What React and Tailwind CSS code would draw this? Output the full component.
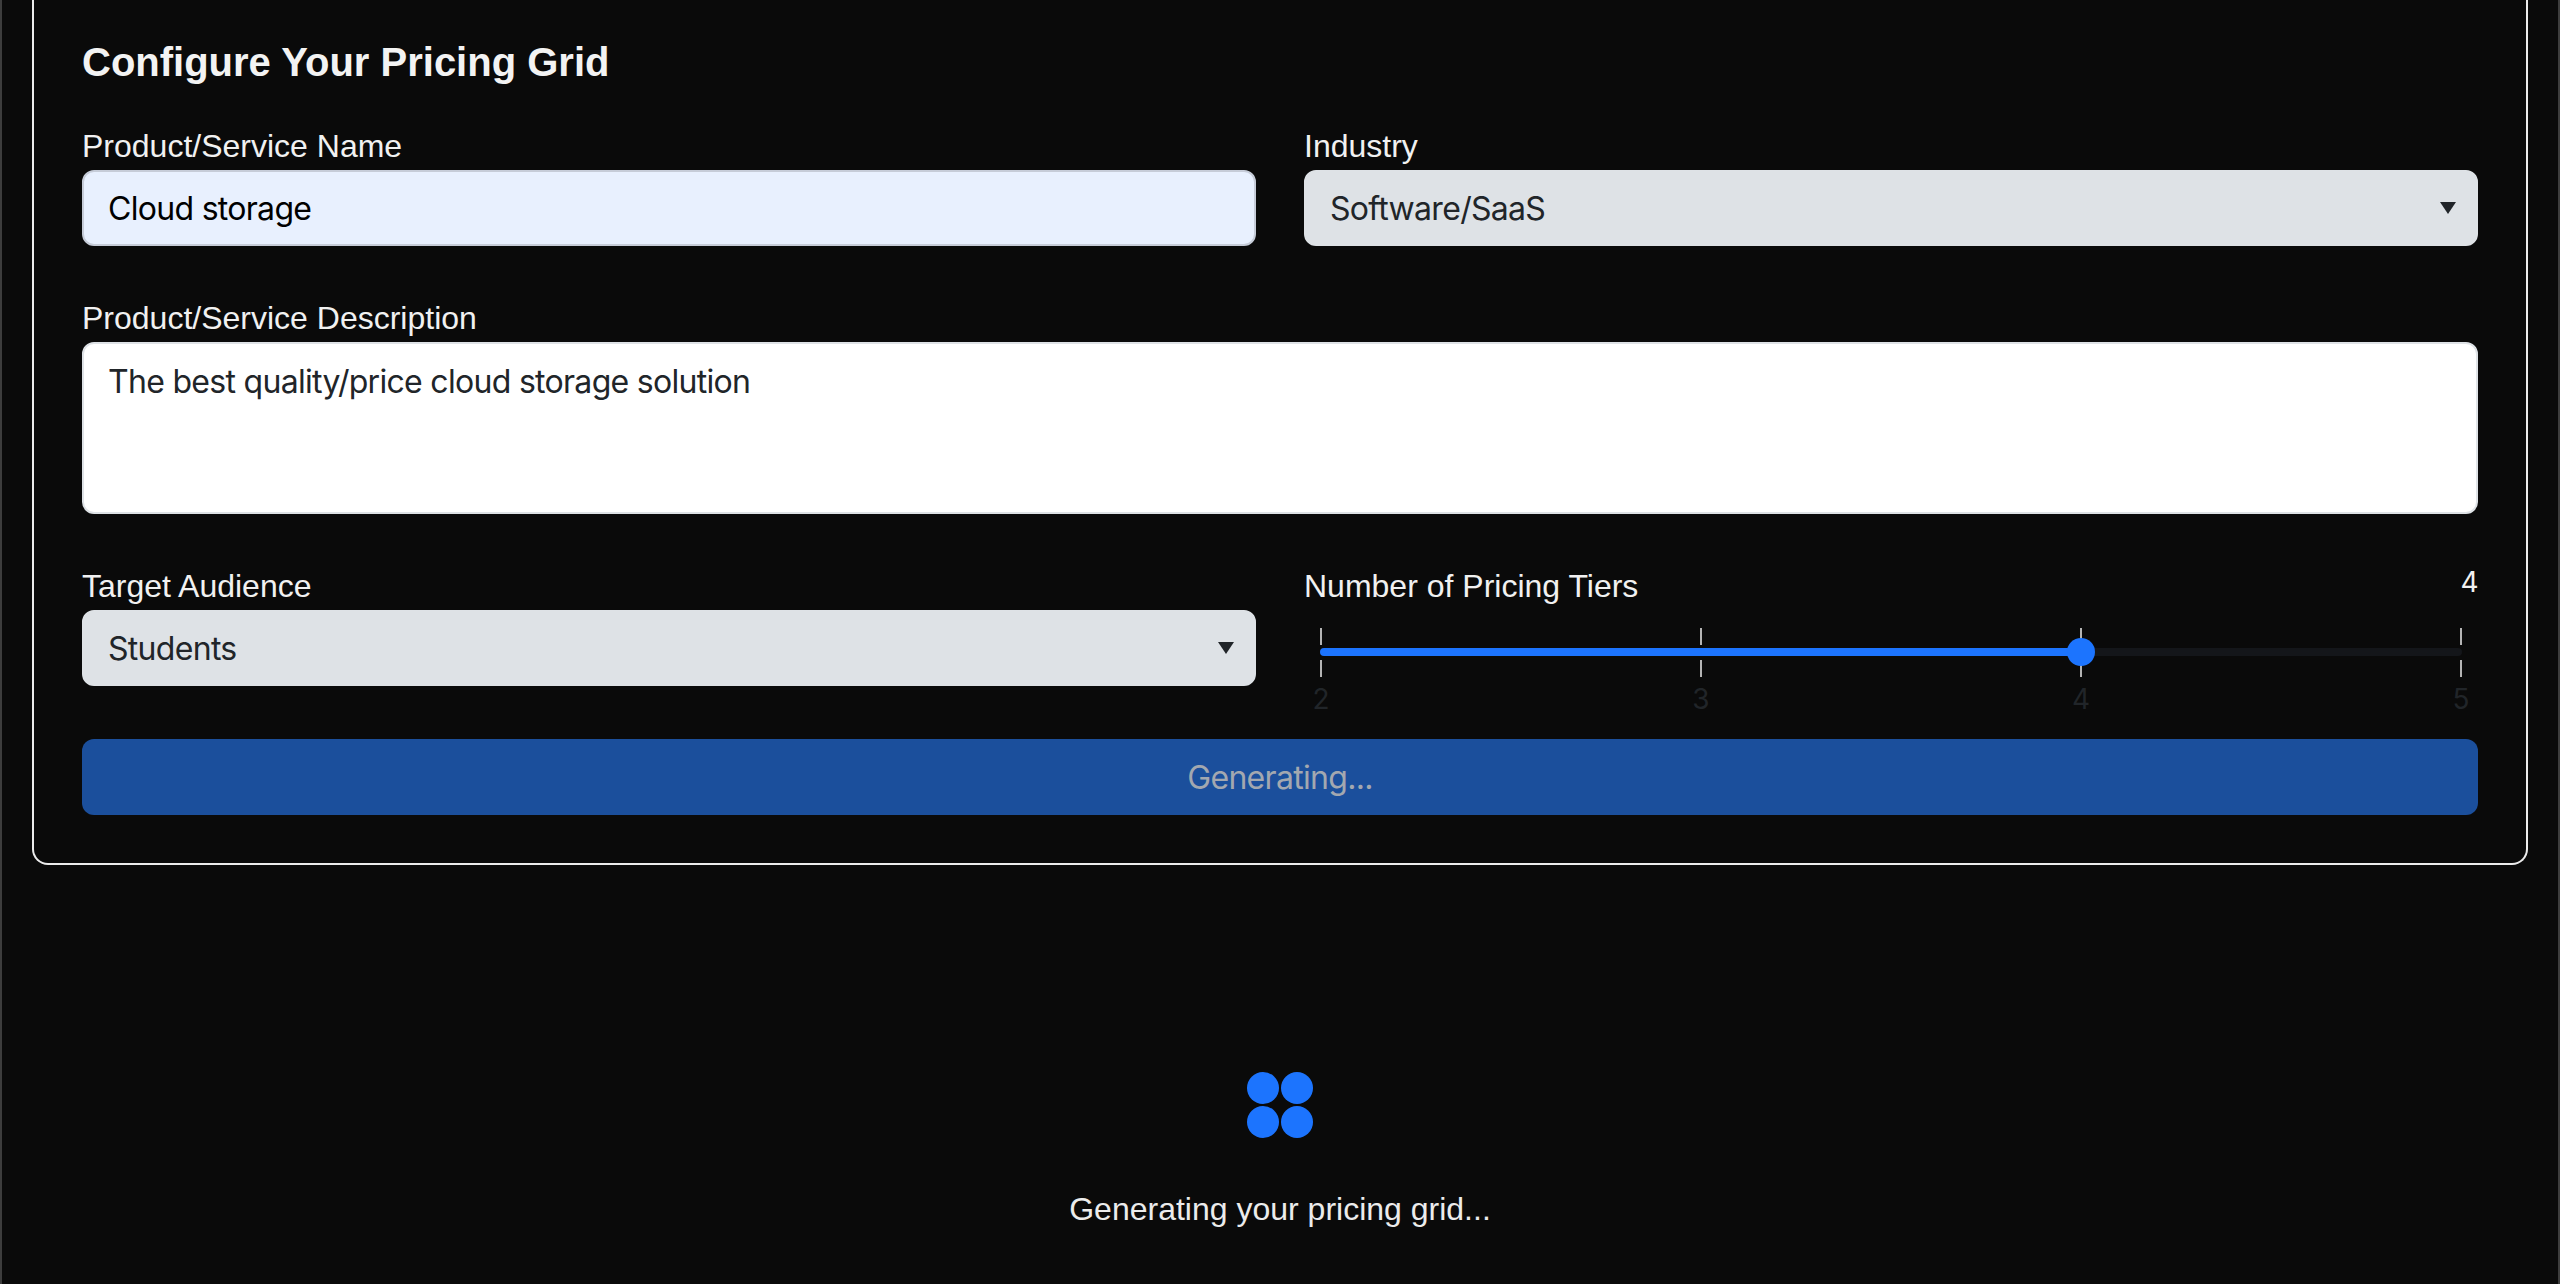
const sans = "font-['Liberation_Sans',Arial,sans-serif]";
const ui = "font-['Inter',sans-serif] tracking-[-0.7px]";

function Label({ children }) {
  return <label className={`block text-[32px] leading-[48px] text-[#f1f1f1] ${sans}`}>{children}</label>;
}

function Select({ value }) {
  return (
    <div className="relative">
      <select
        defaultValue={value}
        className={`block w-full h-[76px] appearance-none rounded-xl border-2 border-[#dee2e6] bg-[#dee2e6] px-6 pt-[2px] text-[32px] text-[#212529] ${ui}`}
      >
        <option>{value}</option>
      </select>
      <svg className="absolute right-[22px] top-[32px] w-4 h-3" viewBox="0 0 16 12">
        <path d="M0 0H16L8 12Z" fill="#212529" />
      </svg>
    </div>
  );
}

function Tick({ n }) {
  return (
    <div className="w-[2px] flex flex-col items-center">
      <div className="flex flex-col justify-between h-[49px]">
        <div className="w-[2px] h-[17px] bg-[#b4b4b4]" />
        <div className="w-[2px] h-[17px] bg-[#b4b4b4]" />
      </div>
      <span className={`mt-[2px] text-[28px] leading-[40px] text-[#212529] font-['Inter',sans-serif]`}>{n}</span>
    </div>
  );
}

export default function App() {
  return (
    <div className="min-h-[1284px] bg-[#0a0a0a] border-x-2 border-[#3d3d3d] px-[30px] overflow-hidden">
      <div className="rounded-b-2xl border-x-2 border-b-2 border-[#ececec] px-[48px] pt-[38px] pb-[48px]">
        <h2 className={`text-[40px] leading-[48px] font-bold text-[#f3f3f3] mb-[36px] ${sans}`}>Configure Your Pricing Grid</h2>

        <div className="grid grid-cols-2 gap-x-12">
          <div>
            <Label>Product/Service Name</Label>
            <input
              readOnly
              value="Cloud storage"
              className={`block w-full h-[76px] rounded-xl border-2 border-[#c6ccd8] bg-[#e8f0fe] px-6 text-[32px] text-black ${ui}`}
            />
          </div>
          <div>
            <Label>Industry</Label>
            <Select value="Software/SaaS" />
          </div>
        </div>

        <div className="mt-12">
          <Label>Product/Service Description</Label>
          <textarea
            readOnly
            value="The best quality/price cloud storage solution"
            className={`block w-full h-[172px] resize-none rounded-xl border-2 border-[#dee2e6] bg-white px-6 pt-[14px] pb-[12px] text-[32px] leading-[48px] text-[#212529] ${ui}`}
          />
        </div>

        <div className="grid grid-cols-2 gap-x-12 mt-[48px]">
          <div>
            <Label>Target Audience</Label>
            <Select value="Students" />
          </div>
          <div>
            <div className="flex justify-between items-start">
              <Label>Number of Pricing Tiers</Label>
              <span className={`text-[28px] leading-[40px] text-[#f1f1f1] ${ui}`}>4</span>
            </div>
            <div className="relative mx-4 mt-[18px]">
              <div className="flex justify-between">
                <Tick n="2" />
                <Tick n="3" />
                <Tick n="4" />
                <Tick n="5" />
              </div>
              <div className="absolute left-0 right-0 top-[20px] h-2 rounded-full bg-[#14161a]">
                <div className="h-2 w-[761px] rounded-full bg-[#1c74fe]" />
              </div>
              <div className="absolute left-[747px] top-[10px] w-7 h-7 rounded-full bg-[#1c74fe]" />
            </div>
          </div>
        </div>

        <button
          disabled
          className={`block w-full h-[76px] mt-[20px] pt-[2px] rounded-xl bg-[#1b4f9c] text-[32px] text-[#a3a8b0] ${ui}`}
        >
          Generating...
        </button>
      </div>

      <div className="flex flex-col items-center mt-[207px]">
        <div className="grid grid-cols-2 gap-[2px]">
          <div className="w-8 h-8 rounded-full bg-[#1c74fe]" />
          <div className="w-8 h-8 rounded-full bg-[#1c74fe]" />
          <div className="w-8 h-8 rounded-full bg-[#1c74fe]" />
          <div className="w-8 h-8 rounded-full bg-[#1c74fe]" />
        </div>
        <p className={`mt-[47px] text-[32px] leading-[48px] text-[#ececec] ${sans}`}>Generating your pricing grid...</p>
      </div>
    </div>
  );
}
